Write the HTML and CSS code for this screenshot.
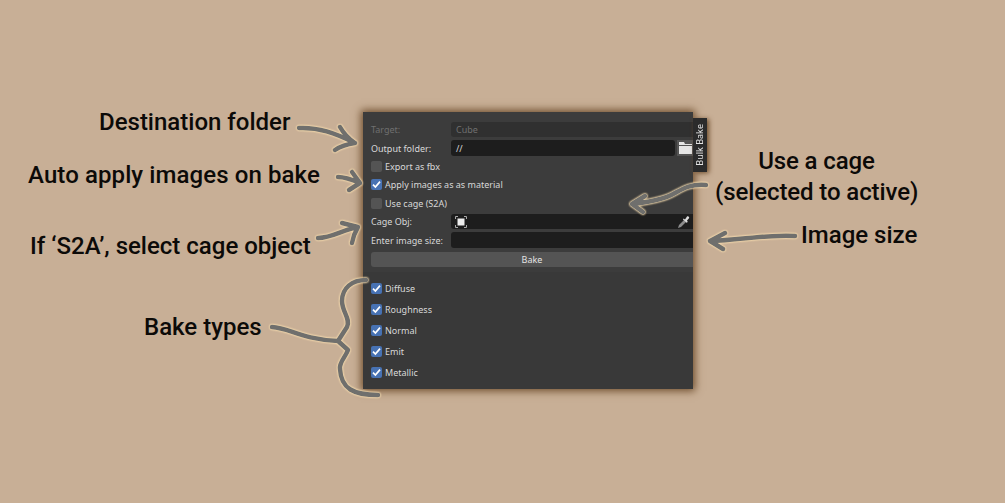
FILE: index.html
```html
<!DOCTYPE html>
<html lang="en">
<head>
    <meta charset="UTF-8">
    <meta name="viewport" content="width=device-width, initial-scale=1.0">
    <title>Bulk Bake</title>
    <link rel="stylesheet" href="styles.css">
</head>
<body>
    <div class="panel">
        <div class="tab"><span>Bulk Bake</span></div>
        <div class="props">
            <div class="row disabled"><span class="label">Target:</span><div class="field">Cube</div></div>
            <div class="row">
                <span class="label">Output folder:</span>
                <div class="field field-split">//</div>
                <div class="folder-btn">
                    <svg width="13" height="12" viewBox="0 0 13 12"><path d="M0 0h5l1 2h7v1H0z" fill="#e6e6e6"/><path d="M0 4h13v8H0z" fill="#e6e6e6"/></svg>
                </div>
            </div>
            <div class="row check-row"><span class="box"></span>Export as fbx</div>
            <div class="row check-row"><span class="box on"><svg width="11" height="11" viewBox="0 0 11 11"><path d="M2 5.600 4.400 8 9 2.600" fill="none" stroke="#fff" stroke-width="1.7"/></svg></span>Apply images as as material</div>
            <div class="row check-row"><span class="box"></span>Use cage (S2A)</div>
            <div class="row">
                <span class="label">Cage Obj:</span>
                <div class="field field-icons">
                    <svg width="12" height="12" viewBox="0 0 12 12"><path d="M.5 3V.5H3M9 .5h2.500V3M11.500 9v2.500H9M3 11.500H.5V9" fill="none" stroke="#aaa"/><rect x="2.500" y="2.500" width="7" height="7" fill="#eee"/></svg>
                    <svg class="dropper" width="13" height="14" viewBox="0 0 13 14"><path d="M1 13 2 10 7 5 9 7 4 12z" fill="#8c8c8c"/><path d="M6.500 3.500 8 4.500 10 1.500C11 .5 12.800 1.800 12 3.200L10 5.500 10.800 7 9.500 7.800 6 4.500z" fill="#ddd"/></svg>
                </div>
            </div>
            <div class="row"><span class="label">Enter image size:</span><div class="field"></div></div>
            <div class="bake-btn">Bake</div>
        </div>
        <div class="types">
            <div class="type-row"><span class="box on"><svg width="11" height="11" viewBox="0 0 11 11"><path d="M2 5.600 4.400 8 9 2.600" fill="none" stroke="#fff" stroke-width="1.7"/></svg></span>Diffuse</div>
            <div class="type-row"><span class="box on"><svg width="11" height="11" viewBox="0 0 11 11"><path d="M2 5.600 4.400 8 9 2.600" fill="none" stroke="#fff" stroke-width="1.7"/></svg></span>Roughness</div>
            <div class="type-row"><span class="box on"><svg width="11" height="11" viewBox="0 0 11 11"><path d="M2 5.600 4.400 8 9 2.600" fill="none" stroke="#fff" stroke-width="1.7"/></svg></span>Normal</div>
            <div class="type-row"><span class="box on"><svg width="11" height="11" viewBox="0 0 11 11"><path d="M2 5.600 4.400 8 9 2.600" fill="none" stroke="#fff" stroke-width="1.7"/></svg></span>Emit</div>
            <div class="type-row"><span class="box on"><svg width="11" height="11" viewBox="0 0 11 11"><path d="M2 5.600 4.400 8 9 2.600" fill="none" stroke="#fff" stroke-width="1.7"/></svg></span>Metallic</div>
        </div>
    </div>

    <div class="note note-dest">Destination folder</div>
    <div class="note note-auto">Auto apply images on bake</div>
    <div class="note note-s2a">If ‘S2A’, select cage object</div>
    <div class="note note-types">Bake types</div>
    <div class="note note-cage">Use a cage<br>(selected to active)</div>
    <div class="note note-size">Image size</div>

    <svg class="arrows" width="1005" height="503" viewBox="0 0 1005 503">
        <path d="M299 128C318 127 335 133 355 143M340 127C344 134 349 139 355 143 348 144 341 146 335 150"/>
        <path d="M338 177C346 177 353 180 360 183M352 172 360 183 349 190"/>
        <path d="M318 238C332 238 342 230 358 227M342 223 358 227C355 232 353 237 352 243"/>
        <path d="M706 185C682 183 677 196 660 199 650 202 640 203 632 204M645 196 632 204 643 212"/>
        <path d="M795 236C770 234 740 240 710 241M725 233 710 241 723 249"/>
        <path d="M366 280C352 280 342 288 342 301 342 312 351 319 347 327L338 341M272 327C290 328 300 339 338 341L348 350C345 358 339 362 340 369 341 389 354 395 378 395"/>
    </svg>
</body>
</html>
```

FILE: styles.css
```css
body {
    margin: 0;
    width: 1005px;
    height: 503px;
    overflow: hidden;
    position: relative;
    background-color: #c8af96;
    font-family: "Noto Sans", sans-serif;
}
.panel {
    position: absolute;
    left: 363px;
    top: 112px;
    width: 330px;
    height: 277px;
    background: #393939;
    box-shadow: 0 0 8px 2px #6e4d2c;
    color: #d8d8d8;
    font-size: 9px;
}
.tab {
    position: absolute;
    left: 100%;
    top: 6px;
    width: 14px;
    height: 54px;
    padding-right: 2px;
    box-sizing: border-box;
    background: #2b2b2b;
    display: flex;
    align-items: center;
    justify-content: center;
    box-shadow: 2px 1px 5px #6e4d2c;
}
.tab span {
    writing-mode: vertical-rl;
    transform: rotate(180deg);
    white-space: nowrap;
    color: #e4e4e4;
}
.props {
    background: #3c3c3c;
    padding: 10px 0 0 8px;
    height: 150px;
    display: flex;
    flex-direction: column;
    gap: 3px;
}
.row {
    display: flex;
    align-items: center;
    height: 15.4px;
    flex: none;
}
.label {
    width: 80px;
    flex: none;
}
.field {
    flex: 1;
    height: 100%;
    display: flex;
    align-items: center;
    padding-left: 5px;
    background: #1d1d1d;
    border-radius: 3px 0 0 3px;
}
.disabled {
    color: #6f6f6f;
}
.disabled .field {
    background: #303030;
}
.field-split {
    border-radius: 3px;
}
.folder-btn {
    width: 16px;
    height: 100%;
    margin-left: 2px;
    display: flex;
    align-items: center;
    justify-content: center;
    background: #545454;
}
.field-icons {
    justify-content: space-between;
    padding-left: 4px;
    padding-right: 3px;
}
.check-row {
    gap: 3px;
}
.box {
    width: 11px;
    height: 11px;
    flex: none;
    border-radius: 2px;
    background: #545454;
    display: flex;
    align-items: center;
    justify-content: center;
}
.box.on {
    background: #4772b3;
}
.bake-btn {
    height: 15px;
    margin-top: 1px;
    display: flex;
    align-items: center;
    justify-content: center;
    background: #545454;
    border-radius: 3px 0 0 3px;
    color: #e4e4e4;
}
.types {
    padding: 6px 8px 0;
    display: flex;
    flex-direction: column;
}
.type-row {
    display: flex;
    align-items: center;
    gap: 3px;
    height: 21px;
}
.note {
    position: absolute;
    color: #0c0a08;
    font-family: Roboto, "Liberation Sans", sans-serif;
    font-weight: 500;
    font-size: 24px;
    line-height: 28px;
    white-space: nowrap;
}
.note-dest { left: 99px; top: 108px; }
.note-auto { left: 28px; top: 161px; letter-spacing: .1px; }
.note-s2a { left: 30px; top: 232px; }
.note-types { left: 144px; top: 313px; }
.note-cage { left: 715px; top: 146px; width: 203px; text-align: center; line-height: 31px; letter-spacing: -.1px; }
.note-size { left: 801px; top: 221px; }
.arrows {
    position: absolute;
    left: 0;
    top: 0;
    pointer-events: none;
    filter: drop-shadow(0 0 1px #fbe0b0) drop-shadow(0 0 .5px #fbe0b0);
}
.arrows path {
    fill: none;
    stroke: #6f6f6d;
    stroke-width: 4.5;
    stroke-linecap: round;
    stroke-linejoin: round;
}
```
